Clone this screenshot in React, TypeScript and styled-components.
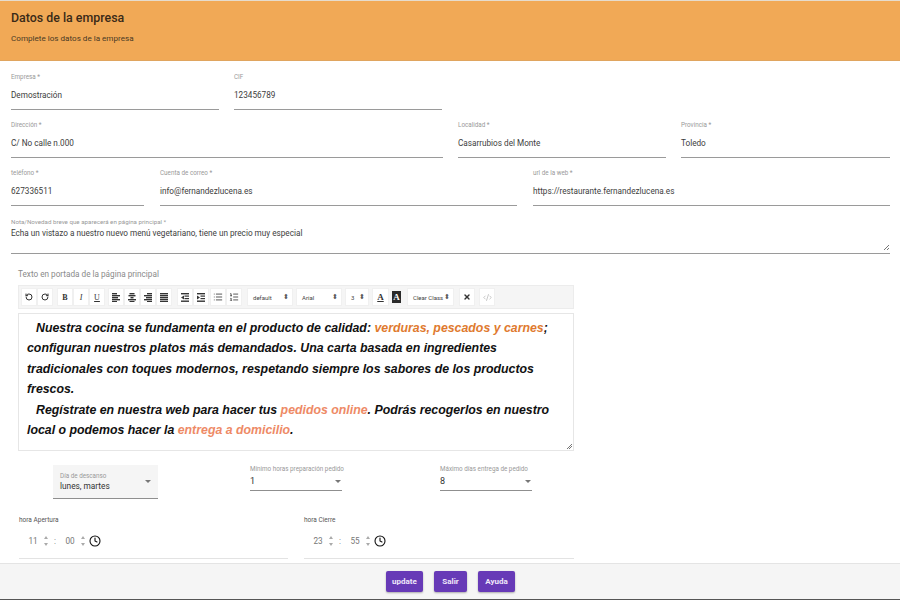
import React from 'react';
import styled, { createGlobalStyle } from 'styled-components';
import { RotateCcw, RotateCw, List, ListOrdered, X, Clock, CodeXml } from 'lucide-react';

const GlobalStyle = createGlobalStyle`
    html, body {
        margin: 0;
        padding: 0;
        background: #fff;
        font-family: Roboto, "Liberation Sans", sans-serif;
    }
`;

const AlignGlyph = ({ widths, align }: { widths: number[]; align: 'left' | 'center' | 'right' }) => (
    <svg width="8" height="9" viewBox="0 0 8 9">
        {widths.map((w, i) => (
            <rect
                key={i}
                x={align === 'left' ? 0 : align === 'right' ? 8 - w : (8 - w) / 2}
                y={i * 2}
                width={w}
                height="1.4"
                fill="#333"
            />
        ))}
    </svg>
);

const IndentGlyph = ({ flip }: { flip?: boolean }) => (
    <svg width="8" height="9" viewBox="0 0 8 9">
        <rect x="0" y="0" width="8" height="1.4" fill="#333" />
        <rect x="3.5" y="2.5" width="4.5" height="1.2" fill="#333" />
        <rect x="3.5" y="5" width="4.5" height="1.2" fill="#333" />
        <rect x="0" y="7.5" width="8" height="1.4" fill="#333" />
        <path d={flip ? 'M3 2.4 L0 4.4 L3 6.4 Z' : 'M0 2.4 L3 4.4 L0 6.4 Z'} fill="#333" />
    </svg>
);

const TimeInput = ({ label, hours, minutes }: { label: string; hours: string; minutes: string }) => (
    <TimeField>
        <TimeLabel>{label}</TimeLabel>
        <TimeRow>
            <TimeValue>{hours}</TimeValue>
            <Spinner>
                <SpinUp />
                <SpinDown />
            </Spinner>
            <TimeColon>:</TimeColon>
            <TimeValue>{minutes}</TimeValue>
            <Spinner>
                <SpinUp />
                <SpinDown />
            </Spinner>
            <ClockWrap>
                <Clock size={12} strokeWidth={2.2} color="#111" />
            </ClockWrap>
        </TimeRow>
    </TimeField>
);

const Field = ({ label, value }: { label: string; value: string }) => (
    <FieldBox>
        <FieldLabel>{label}</FieldLabel>
        <FieldValue>{value}</FieldValue>
    </FieldBox>
);

const App = () => {
    return (
        <Page>
            <GlobalStyle />
            <Header>
                <Title>Datos de la empresa</Title>
                <Subtitle>Complete los datos de la empresa</Subtitle>
            </Header>
            <Main>
                <FormRow $columns="208px 208px">
                    <Field label="Empresa *" value="Demostración" />
                    <Field label="CIF" value="123456789" />
                </FormRow>
                <FormRow $columns="432px 208px 209px">
                    <Field label="Dirección *" value="C/ No calle n.000" />
                    <Field label="Localidad *" value="Casarrubios del Monte" />
                    <Field label="Provincia *" value="Toledo" />
                </FormRow>
                <FormRow $columns="133px 357px 357px" $gap={16}>
                    <Field label="teléfono *" value="627336511" />
                    <Field label="Cuenta de correo *" value="info@fernandezlucena.es" />
                    <Field label="url de la web *" value="https://restaurante.fernandezlucena.es" />
                </FormRow>
                <NoteField>
                    <NoteLabel>Nota/Novedad breve que aparecerá en página principal *</NoteLabel>
                    <NoteValue>Echa un vistazo a nuestro nuevo menú vegetariano, tiene un precio muy especial</NoteValue>
                    <NoteGrip />
                </NoteField>

                <EditorSection>
                    <EditorLabel>Texto en portada de la página principal</EditorLabel>
                    <Toolbar>
                        <ToolGroup>
                            <ToolButton><RotateCcw size={8} strokeWidth={3} /></ToolButton>
                            <ToolButton><RotateCw size={8} strokeWidth={3} /></ToolButton>
                        </ToolGroup>
                        <ToolGroup>
                            <ToolButton $serif>B</ToolButton>
                            <ToolButton $serif $italic>I</ToolButton>
                            <ToolButton $serif $underline>U</ToolButton>
                        </ToolGroup>
                        <ToolGroup $left={-1}>
                            <ToolButton><AlignGlyph align="left" widths={[5, 8, 6, 8, 5]} /></ToolButton>
                            <ToolButton><AlignGlyph align="center" widths={[5, 7, 3, 8, 5]} /></ToolButton>
                            <ToolButton><AlignGlyph align="right" widths={[5, 8, 6, 8, 5]} /></ToolButton>
                            <ToolButton><AlignGlyph align="left" widths={[8, 8, 8, 8, 8]} /></ToolButton>
                        </ToolGroup>
                        <ToolGroup $left={1}>
                            <ToolButton><IndentGlyph flip /></ToolButton>
                            <ToolButton><IndentGlyph /></ToolButton>
                        </ToolGroup>
                        <ToolGroup $left={-3} $right={2}>
                            <ToolButton><List size={10} strokeWidth={1.8} color="#222" /></ToolButton>
                            <ToolButton><ListOrdered size={10} strokeWidth={1.8} color="#222" /></ToolButton>
                        </ToolGroup>
                        <ToolSelect $width={46}>default<SelectArrows>⬍</SelectArrows></ToolSelect>
                        <ToolSelect $width={46}>Arial<SelectArrows>⬍</SelectArrows></ToolSelect>
                        <ToolSelect $width={24}>3<SelectArrows>⬍</SelectArrows></ToolSelect>
                        <ColorButton>A</ColorButton>
                        <ColorButton $dark>A</ColorButton>
                        <ToolSelect $width={47}>Clear Class<SelectArrows>⬍</SelectArrows></ToolSelect>
                        <ToolGroup $gap={4} $left={2}>
                            <ToolButton><X size={8} strokeWidth={4} /></ToolButton>
                            <ToolButton $muted><CodeXml size={9} strokeWidth={1.4} /></ToolButton>
                        </ToolGroup>
                    </Toolbar>
                    <EditorBody>
                        <Paragraph>
                            Nuestra cocina se fundamenta en el producto de calidad:{' '}
                            <Accent>verduras, pescados y carnes</Accent>; configuran nuestros platos más
                            demandados. Una carta basada en ingredientes tradicionales con toques modernos,
                            respetando siempre los sabores de los productos frescos.
                        </Paragraph>
                        <Paragraph>
                            Regístrate en nuestra web para hacer tus <Soft>pedidos online</Soft>. Podrás
                            recogerlos en nuestro local o podemos hacer la <Soft>entrega a domicilio</Soft>.
                        </Paragraph>
                        <EditorGrip />
                    </EditorBody>
                </EditorSection>

                <SelectRow>
                    <FilledSelect>
                        <FilledText>
                            <SelectLabel>Día de descanso</SelectLabel>
                            <FilledValue>lunes, martes</FilledValue>
                        </FilledText>
                        <Caret />
                    </FilledSelect>
                    <PlainSelect>
                        <SelectLabel>Mínimo horas preparación pedido</SelectLabel>
                        <PlainValue>
                            1<Caret />
                        </PlainValue>
                    </PlainSelect>
                    <PlainSelect>
                        <SelectLabel>Máximo días entrega de pedido</SelectLabel>
                        <PlainValue>
                            8<Caret />
                        </PlainValue>
                    </PlainSelect>
                </SelectRow>

                <TimeGrid>
                    <TimeInput label="hora Apertura" hours="11" minutes="00" />
                    <TimeInput label="hora Cierre" hours="23" minutes="55" />
                </TimeGrid>
            </Main>
            <Footer>
                <ActionButton $width={37}>update</ActionButton>
                <ActionButton $width={33}>Salir</ActionButton>
                <ActionButton $width={37}>Ayuda</ActionButton>
            </Footer>
        </Page>
    );
};

const Page = styled.div`
    width: 900px;
    height: 600px;
    display: flex;
    flex-direction: column;
    overflow: hidden;
    background: #fff;
    color: #333;
`;

const Header = styled.header`
    height: 61px;
    box-sizing: border-box;
    padding: 10px 11px 0;
    background: #f1a956;
    box-shadow: inset 0 1px 0 #e6dccd;
    border-bottom: 1px solid #e0a55f;
`;

const Title = styled.h1`
    margin: 0;
    font-size: 12.4px;
    line-height: 15px;
    font-weight: 500;
    color: #3a2a18;
`;

const Subtitle = styled.p`
    margin: 8px 0 0;
    font-size: 8.1px;
    line-height: 11px;
    font-weight: 400;
    color: #4a3a25;
`;

const Main = styled.main`
    flex: 1;
    min-height: 0;
    overflow: hidden;
    display: flex;
    flex-direction: column;
    padding-top: 1px;
`;

const FormRow = styled.div<{ $columns: string; $gap?: number }>`
    display: grid;
    grid-template-columns: ${(p) => p.$columns};
    column-gap: ${(p) => p.$gap ?? 15}px;
    height: 48px;
    flex: none;
    padding: 0 10px 0 11px;
`;

const FieldBox = styled.div`
    display: flex;
    flex-direction: column;
    justify-content: flex-end;
    height: 48px;
    box-sizing: border-box;
    border-bottom: 1px solid #9a9a9a;
`;

const FieldLabel = styled.label`
    font-size: 6.3px;
    line-height: 8px;
    color: #999;
    margin-bottom: 9px;
`;

const FieldValue = styled.div`
    font-size: 8.2px;
    line-height: 11px;
    color: #3d3d3d;
    margin-bottom: 8px;
`;

const NoteField = styled.div`
    position: relative;
    flex: none;
    margin: 0 10px 0 11px;
    height: 48px;
    box-sizing: border-box;
    border-bottom: 1px solid #9a9a9a;
    padding-top: 12px;
`;

const NoteLabel = styled.label`
    display: block;
    font-size: 6.2px;
    line-height: 8px;
    color: #999;
`;

const NoteValue = styled.div`
    margin-top: 1px;
    font-size: 8.2px;
    line-height: 12px;
    color: #3d3d3d;
`;

const NoteGrip = styled.span`
    position: absolute;
    right: 1px;
    bottom: 3px;
    width: 5px;
    height: 5px;
    background: linear-gradient(135deg, transparent 45%, #777 45%, #777 55%, transparent 55%, transparent 70%, #777 70%, #777 80%, transparent 80%);
`;

const EditorSection = styled.section`
    flex: none;
    width: 556px;
    margin: 15px 0 0 18px;
`;

const EditorLabel = styled.div`
    font-size: 8.2px;
    line-height: 11px;
    color: #8a8a8a;
    margin-bottom: 5px;
`;

const Toolbar = styled.div`
    display: flex;
    align-items: center;
    height: 24px;
    box-sizing: border-box;
    padding: 0 2px;
    gap: 3px;
    background: #f5f5f5;
    border: 1px solid #ececec;
`;

const ToolGroup = styled.div<{ $gap?: number; $left?: number; $right?: number }>`
    display: flex;
    gap: ${(p) => p.$gap ?? 0}px;
    margin-right: ${(p) => p.$right ?? 1}px;
    margin-left: ${(p) => p.$left ?? 0}px;
`;

const ToolButton = styled.button<{
    $serif?: boolean;
    $italic?: boolean;
    $underline?: boolean;
    $muted?: boolean;
}>`
    display: flex;
    align-items: center;
    justify-content: center;
    width: 16px;
    height: 18px;
    padding: 0;
    background: #fff;
    border: 1px solid #f0f0f0;
    color: ${(p) => (p.$muted ? '#999' : '#333')};
    font-family: ${(p) => (p.$serif ? '"Liberation Serif", serif' : 'inherit')};
    font-size: 8px;
    font-weight: ${(p) => (p.$italic || p.$underline ? 400 : 700)};
    font-style: ${(p) => (p.$italic ? 'italic' : 'normal')};
    text-decoration: ${(p) => (p.$underline ? 'underline' : 'none')};
`;

const ToolSelect = styled.div<{ $width: number }>`
    display: flex;
    align-items: center;
    justify-content: space-between;
    box-sizing: border-box;
    width: ${(p) => p.$width}px;
    height: 18px;
    padding: 0 3px 0 5px;
    background: #fff;
    border: 1px solid #f0f0f0;
    font-size: 6px;
    color: #444;
    white-space: nowrap;
`;

const SelectArrows = styled.span`
    font-size: 7px;
    color: #555;
`;

const ColorButton = styled.button<{ $dark?: boolean }>`
    display: flex;
    align-items: center;
    justify-content: center;
    width: ${(p) => (p.$dark ? '9px' : '17px')};
    height: ${(p) => (p.$dark ? '12px' : '18px')};
    padding: 0;
    margin-right: ${(p) => (p.$dark ? '3px' : '0')};
    background: ${(p) => (p.$dark ? '#2a2a2a' : '#fff')};
    border: ${(p) => (p.$dark ? '0' : '1px solid #f0f0f0')};
    color: ${(p) => (p.$dark ? '#fff' : '#333')};
    font-family: "Liberation Serif", serif;
    font-size: 9px;
    font-weight: 700;
    text-decoration: ${(p) => (p.$dark ? 'none' : 'underline')};
`;

const EditorBody = styled.div`
    position: relative;
    height: 138px;
    box-sizing: border-box;
    margin-top: 4px;
    padding: 4px 8px 0;
    border: 1px solid #e6e6e6;
    font-family: "Liberation Sans", Arial, sans-serif;
    font-size: 12.33px;
    line-height: 20.4px;
    font-weight: 700;
    font-style: italic;
    color: #111;
`;

const Paragraph = styled.p`
    margin: 0;
    text-indent: 9px;
`;

const Accent = styled.span`
    color: #e07a2f;
`;

const Soft = styled.span`
    color: #ee8a66;
`;

const EditorGrip = styled(NoteGrip)`
    right: 1px;
    bottom: 1px;
`;

const SelectRow = styled.div`
    display: flex;
    align-items: flex-start;
    flex: none;
    height: 54px;
    margin-top: 14px;
    padding-left: 53px;
`;

const FilledSelect = styled.div`
    display: flex;
    align-items: center;
    justify-content: space-between;
    box-sizing: border-box;
    width: 105px;
    height: 34px;
    padding: 0 7px;
    background: #f5f5f5;
    border-bottom: 1px solid #8f8f8f;
    margin-right: 92px;
`;

const FilledText = styled.div`
    display: flex;
    flex-direction: column;
`;

const SelectLabel = styled.label`
    display: block;
    font-size: 6.3px;
    line-height: 9px;
    color: #999;
    white-space: nowrap;
`;

const FilledValue = styled.div`
    font-size: 8.3px;
    line-height: 11px;
    color: #333;
`;

const PlainSelect = styled.div`
    width: 92px;
    height: 26px;
    margin-right: 98px;
    box-sizing: border-box;
    border-bottom: 1px solid #8f8f8f;
`;

const PlainValue = styled.div`
    display: flex;
    align-items: center;
    justify-content: space-between;
    height: 14px;
    padding-right: 1px;
    font-size: 9px;
    color: #333;
`;

const Caret = styled.span`
    width: 0;
    height: 0;
    border-left: 3.5px solid transparent;
    border-right: 3.5px solid transparent;
    border-top: 3.5px solid #777;
`;

const TimeGrid = styled.div`
    display: grid;
    flex: none;
    grid-template-columns: 269px 270px;
    column-gap: 16px;
    margin: -3px 0 0 19px;
`;

const TimeField = styled.div`
    height: 43px;
    box-sizing: border-box;
    border-bottom: 1px solid #e3e3e3;
`;

const TimeLabel = styled.div`
    font-size: 6.5px;
    line-height: 9px;
    color: #555;
`;

const TimeRow = styled.div`
    display: flex;
    align-items: center;
    height: 14px;
    margin-top: 9px;
    padding-left: 7px;
    font-size: 8.2px;
    color: #777;
`;

const TimeValue = styled.span`
    display: inline-block;
    width: 14px;
    text-align: center;
`;

const TimeColon = styled.span`
    margin: 0 7px 0 3.5px;
`;

const Spinner = styled.span`
    display: inline-flex;
    flex-direction: column;
    align-items: center;
    gap: 4px;
    width: 9px;
    margin-left: 1.5px;
`;

const SpinUp = styled.span`
    width: 0;
    height: 0;
    border-left: 2.5px solid transparent;
    border-right: 2.5px solid transparent;
    border-bottom: 3px solid #aaa;
`;

const SpinDown = styled.span`
    width: 0;
    height: 0;
    border-left: 2.5px solid transparent;
    border-right: 2.5px solid transparent;
    border-top: 3px solid #aaa;
`;

const ClockWrap = styled.span`
    display: inline-flex;
    margin-left: 1.5px;
`;

const Footer = styled.footer`
    display: flex;
    flex: none;
    justify-content: center;
    align-items: center;
    gap: 11px;
    height: 37px;
    box-sizing: border-box;
    padding: 0 0 1px 1px;
    background: #f5f5f5;
    border-top: 1px solid #e4e4e4;
    border-bottom: 1px solid #555;
`;

const ActionButton = styled.button<{ $width: number }>`
    width: ${(p) => p.$width}px;
    height: 21px;
    padding: 0;
    border: 0;
    border-radius: 2px;
    background: #673ab7;
    box-shadow: 0 1px 2px rgba(0, 0, 0, 0.3);
    color: #f0e8fa;
    font-family: Roboto, sans-serif;
    font-size: 8px;
    font-weight: 700;
`;

export default App;
